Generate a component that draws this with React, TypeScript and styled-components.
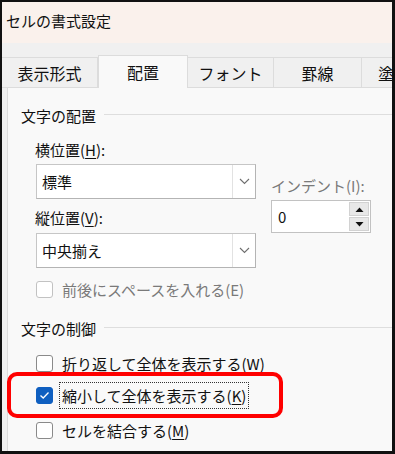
import React from 'react';
import styled, {createGlobalStyle} from 'styled-components';

const GlobalStyle = createGlobalStyle`
  body {
    margin: 0;
    background: #ffffff;
    font-family: "Noto Sans CJK JP", "Noto Sans", sans-serif;
    color: #111;
  }
`;

const Frame = styled.div`
  position: relative;
  width: 395px;
  height: 454px;
  box-sizing: border-box;
  border: 2px solid #111;
  border-right-width: 3px;
  border-bottom-width: 3px;
  background: #f0f0f0;
  display: flex;
  flex-direction: column;
  overflow: hidden;
`;

const TitleBar = styled.div`
  height: 41px;
  flex: none;
  display: flex;
  align-items: center;
  padding: 0 0 4px 4px;
  box-sizing: border-box;
  background: #faf1ec;
  font-size: 15px;
  color: #111;
`;

const TabStrip = styled.div`
  margin-top: 12px;
  height: 33px;
  flex: none;
  display: flex;
  align-items: flex-end;
`;

const Tab = styled.div<{ $w: number; $active?: boolean }>`
  flex: none;
  width: ${p => p.$w}px;
  height: ${p => (p.$active ? 33 : 31)}px;
  box-sizing: border-box;
  display: flex;
  align-items: center;
  justify-content: center;
  padding-top: ${p => (p.$active ? 0 : 1)}px;
  font-size: 16px;
  color: #111;
  background: ${p => (p.$active ? '#f9f9f9' : '#f0f0f0')};
  border: 1px solid #dcdcdc;
  border-bottom: ${p => (p.$active ? 'none' : '1px solid #dcdcdc')};
  margin-left: ${p => (p.$active ? 0 : -1)}px;
  white-space: nowrap;
`;

const Panel = styled.div`
  flex: 1;
  margin-left: 5px;
  background: #f9f9f9;
  border-left: 1px solid #dcdcdc;
  padding-left: 13px;
`;

const SectionHeader = styled.div<{ $top: number }>`
  margin-top: ${p => p.$top}px;
  height: 20px;
  display: flex;
  align-items: center;
  gap: 8px;
  font-size: 15px;
  color: #111;
  &::after {
    content: '';
    flex: 1;
    height: 1px;
    margin-top: -2px;
    background: #dedede;
  }
`;

const Group = styled.div`
  padding-left: 14px;
`;

const AlignRow = styled.div`
  display: flex;
  gap: 15px;
`;

const Column = styled.div<{ $top?: number }>`
  display: flex;
  flex-direction: column;
  padding-top: ${p => p.$top ?? 0}px;
`;

const FieldLabel = styled.div<{ $top?: number; $muted?: boolean }>`
  margin-top: ${p => p.$top ?? 0}px;
  height: 20px;
  line-height: 20px;
  font-size: 15px;
  color: ${p => (p.$muted ? '#7a7a7a' : '#111')};
  white-space: nowrap;
`;

const Key = styled.span`
  text-decoration: underline;
  text-underline-offset: 2px;
`;

const Combo = styled.div<{ $top: number }>`
  margin-top: ${p => p.$top}px;
  margin-left: 1px;
  width: 220px;
  height: 35px;
  box-sizing: border-box;
  display: flex;
  background: #ffffff;
  border: 1px solid #c6c6c6;
  border-right-color: #b4b4b4;
  border-bottom-color: #b4b4b4;
`;

const ComboText = styled.div`
  flex: 1;
  display: flex;
  align-items: center;
  padding-left: 5px;
  font-size: 15px;
  color: #111;
`;

const ComboButton = styled.div`
  width: 22px;
  display: flex;
  align-items: center;
  justify-content: center;
  border-left: 1px solid #e2e2e2;
`;

const SpinBox = styled.div`
  margin-top: 4px;
  width: 100px;
  height: 33px;
  box-sizing: border-box;
  display: flex;
  align-items: stretch;
  background: #ffffff;
  border: 1px solid #c2c2c2;
`;

const SpinValue = styled.div`
  flex: 1;
  display: flex;
  align-items: center;
  padding-left: 6px;
  font-size: 15px;
`;

const SpinButtons = styled.div`
  width: 20px;
  margin: 1px 1px 1px 0;
  display: flex;
  flex-direction: column;
  gap: 1px;
`;

const SpinButton = styled.div`
  flex: 1;
  display: flex;
  align-items: center;
  justify-content: center;
  background: #e8e8e8;
  border: 1px solid #d2d2d2;
`;

const CheckRow = styled.div<{ $top: number; $muted?: boolean }>`
  margin-top: ${p => p.$top}px;
  height: 27px;
  display: flex;
  align-items: center;
  gap: 4px;
  margin-left: 1px;
  font-size: 15px;
  color: ${p => (p.$muted ? '#7a7a7a' : '#111')};
  white-space: nowrap;
`;

const Box = styled.div<{ $checked?: boolean; $muted?: boolean }>`
  width: 17px;
  height: 17px;
  box-sizing: border-box;
  flex: none;
  border-radius: 3px;
  display: flex;
  align-items: center;
  justify-content: center;
  background: ${p => (p.$checked ? '#0f5fc0' : '#ffffff')};
  border: 1px solid ${p => (p.$checked ? '#0f5fc0' : p.$muted ? '#c2c2c2' : '#8a8a8a')};
  margin-right: 2px;
`;

const CheckText = styled.span<{ $focused?: boolean }>`
  padding: 1px 2px;
  border: 1px dotted ${p => (p.$focused ? '#333' : 'transparent')};
  line-height: 23px;
`;

const Highlight = styled.div`
  position: absolute;
  left: 5px;
  top: 370px;
  width: 276px;
  height: 46px;
  box-sizing: border-box;
  border: 4px solid #ff0000;
  border-radius: 10px;
  pointer-events: none;
`;

const Chevron = () => (
  <svg width="11" height="7" viewBox="0 0 11 7">
    <path d="M1 1 L5.5 5.5 L10 1" fill="none" stroke="#6e6e6e" strokeWidth="1.1" />
  </svg>
);

const Tri = ({up}: { up?: boolean }) => (
  <svg width="9" height="5" viewBox="0 0 9 5">
    <path d={up ? 'M0.5 5 L4.5 0.5 L8.5 5 Z' : 'M0.5 0 L4.5 4.5 L8.5 0 Z'} fill="#111" />
  </svg>
);

const Check = () => (
  <svg width="11" height="9" viewBox="0 0 11 9">
    <path d="M1.5 4.5 L4.2 7 L9.5 1.5" fill="none" stroke="#fff" strokeWidth="1.3" />
  </svg>
);

const tabs = [
  {label: '表示形式', w: 97},
  {label: '配置', w: 90, active: true},
  {label: 'フォント', w: 87},
  {label: '罫線', w: 89},
  {label: '塗', w: 50},
];

const App: React.FC = () => {
  return (
    <Frame>
      <GlobalStyle />
      <TitleBar>セルの書式設定</TitleBar>
      <TabStrip>
        {tabs.map(t => (
          <Tab key={t.label} $w={t.w} $active={t.active}>
            {t.label}
          </Tab>
        ))}
      </TabStrip>
      <Panel>
        <SectionHeader $top={17}>文字の配置</SectionHeader>
        <Group>
          <AlignRow>
            <Column>
              <FieldLabel $top={15}>
                横位置(<Key>H</Key>):
              </FieldLabel>
              <Combo $top={4}>
                <ComboText>標準</ComboText>
                <ComboButton>
                  <Chevron />
                </ComboButton>
              </Combo>
              <FieldLabel $top={9}>
                縦位置(<Key>V</Key>):
              </FieldLabel>
              <Combo $top={5}>
                <ComboText>中央揃え</ComboText>
                <ComboButton>
                  <Chevron />
                </ComboButton>
              </Combo>
              <CheckRow $top={8} $muted>
                <Box $muted />
                <CheckText>前後にスペースを入れる(E)</CheckText>
              </CheckRow>
            </Column>
            <Column $top={51}>
              <FieldLabel $muted>インデント(I):</FieldLabel>
              <SpinBox>
                <SpinValue>0</SpinValue>
                <SpinButtons>
                  <SpinButton>
                    <Tri up />
                  </SpinButton>
                  <SpinButton>
                    <Tri />
                  </SpinButton>
                </SpinButtons>
              </SpinBox>
            </Column>
          </AlignRow>
        </Group>
        <SectionHeader $top={15}>文字の制御</SectionHeader>
        <Group>
          <CheckRow $top={12}>
            <Box />
            <CheckText>折り返して全体を表示する(W)</CheckText>
          </CheckRow>
          <CheckRow $top={5}>
            <Box $checked>
              <Check />
            </Box>
            <CheckText $focused>
              縮小して全体を表示する(<Key>K</Key>)
            </CheckText>
          </CheckRow>
          <CheckRow $top={8}>
            <Box />
            <CheckText>
              セルを結合する(<Key>M</Key>)
            </CheckText>
          </CheckRow>
        </Group>
      </Panel>
      <Highlight />
    </Frame>
  );
};

export default App;
